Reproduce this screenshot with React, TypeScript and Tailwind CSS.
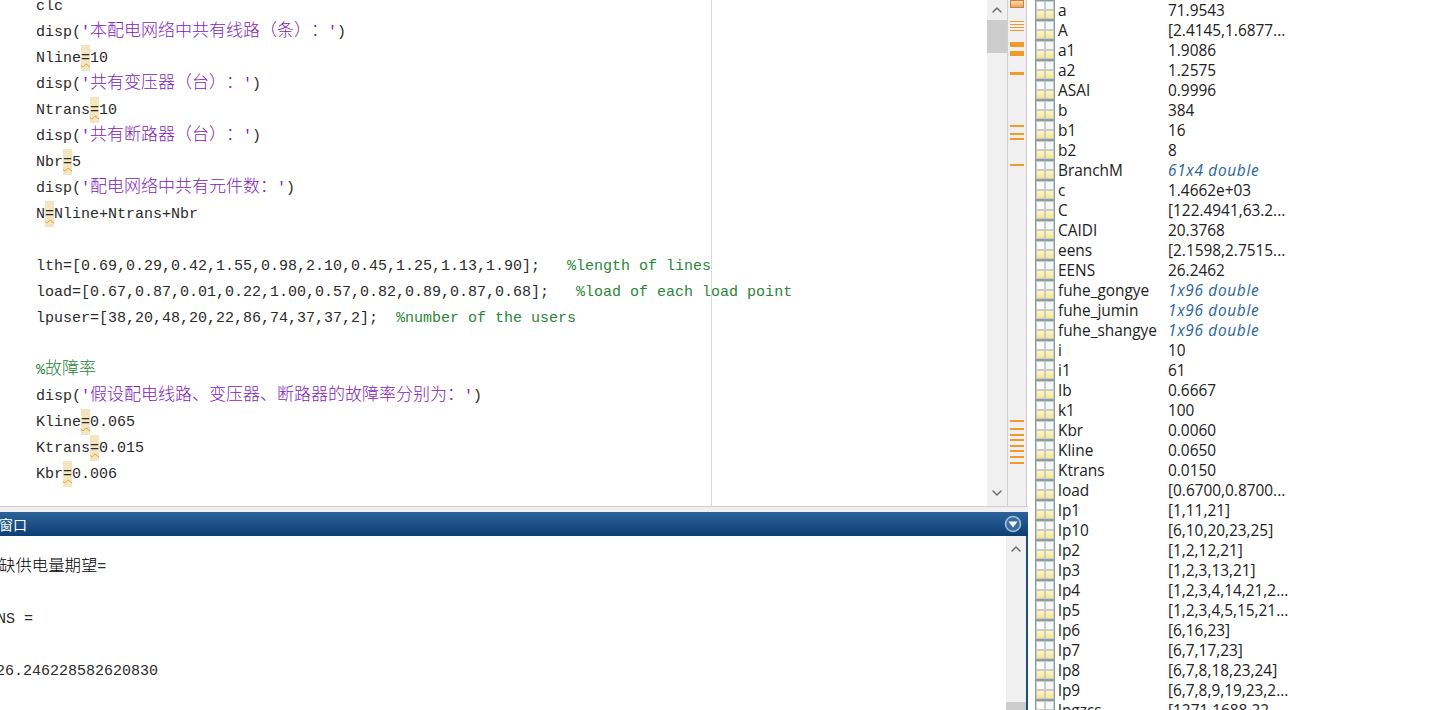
import { ChevronDown, ChevronUp } from 'lucide-react'
import type { ReactNode } from 'react'

const workspace: [string, string, boolean?][] = [
  ['a', '71.9543'],
  ['A', '[2.4145,1.6877...'],
  ['a1', '1.9086'],
  ['a2', '1.2575'],
  ['ASAI', '0.9996'],
  ['b', '384'],
  ['b1', '16'],
  ['b2', '8'],
  ['BranchM', '61x4 double', true],
  ['c', '1.4662e+03'],
  ['C', '[122.4941,63.2...'],
  ['CAIDI', '20.3768'],
  ['eens', '[2.1598,2.7515...'],
  ['EENS', '26.2462'],
  ['fuhe_gongye', '1x96 double', true],
  ['fuhe_jumin', '1x96 double', true],
  ['fuhe_shangye', '1x96 double', true],
  ['i', '10'],
  ['i1', '61'],
  ['Ib', '0.6667'],
  ['k1', '100'],
  ['Kbr', '0.0060'],
  ['Kline', '0.0650'],
  ['Ktrans', '0.0150'],
  ['load', '[0.6700,0.8700...'],
  ['lp1', '[1,11,21]'],
  ['lp10', '[6,10,20,23,25]'],
  ['lp2', '[1,2,12,21]'],
  ['lp3', '[1,2,3,13,21]'],
  ['lp4', '[1,2,3,4,14,21,2...'],
  ['lp5', '[1,2,3,4,5,15,21...'],
  ['lp6', '[6,16,23]'],
  ['lp7', '[6,7,17,23]'],
  ['lp8', '[6,7,8,18,23,24]'],
  ['lp9', '[6,7,8,9,19,23,2...'],
  ['lpgzcs', '[1271,1688,22...'],
]

// overview ruler ticks: [top, height]
const marks = [
  [21, 1], [24, 1], [27, 1], [30, 1],
  [42, 5], [51, 5], [72, 3],
  [125, 2], [133, 2], [138, 2], [164, 2],
  [420, 2], [428, 2], [434, 2], [439, 2], [445, 2], [450, 2], [456, 2], [462, 2],
]

function Warn() {
  return (
    <span className="inline-block h-[26px] w-[9px] bg-[#f3e5bf] underline decoration-[#e89a2c] decoration-wavy decoration-[0.5px] underline-offset-[1px]">
      =
    </span>
  )
}

function Str({ children }: { children: ReactNode }) {
  return <span className="text-[#7f22b8]">{children}</span>
}

function Cjk({ children }: { children: ReactNode }) {
  return (
    <span className="font-['Noto_Sans_CJK_SC',sans-serif] text-[17px] leading-none font-light [text-spacing-trim:space-all]">
      {children}
    </span>
  )
}

function Line({ children }: { children?: ReactNode }) {
  return <div className="h-[26px] leading-[28px] whitespace-pre">{children}</div>
}

function Disp({ text }: { text: string }) {
  return (
    <Line>
      disp(
      <Str>
        '<Cjk>{text}</Cjk>'
      </Str>
      )
    </Line>
  )
}

function Comment({ children }: { children: ReactNode }) {
  return <span className="text-[#2b8537]">{children}</span>
}

function TableIcon() {
  return (
    <svg width="20" height="20" viewBox="0 0 20 20" className="shrink-0">
      <defs>
        <linearGradient id="cell" x1="0" y1="0" x2="0" y2="1">
          <stop offset="0" stopColor="#fdf6c8" />
          <stop offset="1" stopColor="#f8e58f" />
        </linearGradient>
      </defs>
      <rect x="0" y="0" width="20" height="20" fill="#8f9ca8" />
      <rect x="1" y="1" width="18" height="18" fill="#c8cdc4" />
      <rect x="2" y="2" width="7" height="7" fill="#fdfdfd" />
      <rect x="11" y="2" width="7" height="7" fill="#f4f8fb" />
      <rect x="2" y="11" width="7" height="7" fill="url(#cell)" />
      <rect x="11" y="11" width="7" height="7" fill="url(#cell)" />
    </svg>
  )
}

function Editor() {
  return (
    <div className="relative h-[506px] min-w-0 flex-1 overflow-hidden pl-[36px] font-['Liberation_Mono',monospace] text-[15px] text-[#2b2b2b]">
      <div className="absolute top-0 bottom-0 left-[711px] w-px bg-[#d9d9d9]" />
      <div className="-mt-[7px]">
        <Line>clc</Line>
        <Disp text="本配电网络中共有线路（条）：" />
        <Line>
          Nline
          <Warn />
          10
        </Line>
        <Disp text="共有变压器（台）：" />
        <Line>
          Ntrans
          <Warn />
          10
        </Line>
        <Disp text="共有断路器（台）：" />
        <Line>
          Nbr
          <Warn />5
        </Line>
        <Disp text="配电网络中共有元件数：" />
        <Line>
          N<Warn />
          Nline+Ntrans+Nbr
        </Line>
        <Line />
        <Line>
          {'lth=[0.69,0.29,0.42,1.55,0.98,2.10,0.45,1.25,1.13,1.90];   '}
          <Comment>%length of lines</Comment>
        </Line>
        <Line>
          {'load=[0.67,0.87,0.01,0.22,1.00,0.57,0.82,0.89,0.87,0.68];   '}
          <Comment>%load of each load point</Comment>
        </Line>
        <Line>
          {'lpuser=[38,20,48,20,22,86,74,37,37,2];  '}
          <Comment>%number of the users</Comment>
        </Line>
        <Line />
        <Line>
          <Comment>
            %<Cjk>故障率</Cjk>
          </Comment>
        </Line>
        <Disp text="假设配电线路、变压器、断路器的故障率分别为：" />
        <Line>
          Kline
          <Warn />
          0.065
        </Line>
        <Line>
          Ktrans
          <Warn />
          0.015
        </Line>
        <Line>
          Kbr
          <Warn />
          0.006
        </Line>
      </div>
    </div>
  )
}

export default function App() {
  return (
    <div className="flex h-[710px] w-[1443px] overflow-hidden bg-white">
      <div className="flex w-[1028px] shrink-0 flex-col">
        <div className="flex h-[507px] border-b border-[#cfcfcf] pr-px">
          <Editor />
          <div className="flex w-[20px] shrink-0 flex-col items-center justify-between bg-[#f0f0f0] pb-[5px]">
            <div className="w-full">
              <div className="flex h-[20px] items-center justify-center">
                <ChevronUp size={16} strokeWidth={2} className="text-[#666]" />
              </div>
              <div className="h-[33px] w-full bg-[#cdcdcd]" />
            </div>
            <ChevronDown size={16} strokeWidth={2} className="text-[#666]" />
          </div>
          <div className="relative w-[20px] shrink-0 border-x border-[#cfcfcf] bg-[#f0f0f0]">
            <div className="absolute top-0 left-[2px] h-[8px] w-[14px] border border-[#b9884f] bg-gradient-to-b from-[#fbd9a8] to-[#f2a654]" />
            {marks.map(([top, height]) => (
              <div
                key={top}
                className="absolute left-[2px] w-[14px] bg-[#ef9a2b]"
                style={{ top, height }}
              />
            ))}
          </div>
        </div>
        <div className="h-[5px] bg-[#f0f0f0]" />
        <div className="flex h-[24px] items-center justify-between bg-gradient-to-b from-[#2c6299] to-[#0e3f73] pr-[6px]">
          <span className="-ml-[43px] font-['Noto_Sans_CJK_SC',sans-serif] text-[14px] text-white">命令行窗口</span>
          <svg width="18" height="18" viewBox="0 0 18 18">
            <circle cx="9" cy="9" r="7.5" fill="#3a6fa3" stroke="#aac2d8" strokeWidth="1.5" />
            <path d="M4.5 6.5h9L9 12.5z" fill="#fff" />
          </svg>
        </div>
        <div className="flex min-h-0 flex-1 border-r-2 border-[#1c4f85]">
          <div className="min-w-0 flex-1 overflow-hidden pt-[18px] font-['Liberation_Mono',monospace] text-[15px] text-[#2b2b2b]">
            <div className="-ml-[1px] h-[26px] leading-[28px] whitespace-pre">
              <span className="font-['Noto_Sans_CJK_SC',sans-serif] text-[16.4px] leading-none font-light text-black">缺供电量期望</span>=
            </div>
            <div className="h-[26px]" />
            <div className="-ml-[21px] h-[26px] leading-[28px] whitespace-pre">EENS =</div>
            <div className="h-[26px]" />
            <div className="-ml-[4px] h-[26px] leading-[28px] whitespace-pre">26.246228582620830</div>
          </div>
          <div className="flex w-[20px] shrink-0 flex-col items-center justify-between bg-[#f0f0f0] pt-[5px]">
            <ChevronUp size={16} strokeWidth={2} className="text-[#666]" />
            <div className="h-[8px] w-full bg-[#cdcdcd]" />
          </div>
        </div>
      </div>
      <div className="min-w-0 flex-1 pl-[7px] font-['Open_Sans',sans-serif] text-[15.4px] text-[#222]">
        {workspace.map(([name, value, dim]) => (
          <div key={name} className="flex h-[20px] leading-[22px]">
            <TableIcon />
            <span className="ml-[3px] w-[110px] shrink-0 whitespace-pre">{name}</span>
            <span className={dim ? 'tracking-[0.7px] whitespace-pre text-[#2a6496] italic' : 'whitespace-pre'}>{value}</span>
          </div>
        ))}
      </div>
    </div>
  )
}
